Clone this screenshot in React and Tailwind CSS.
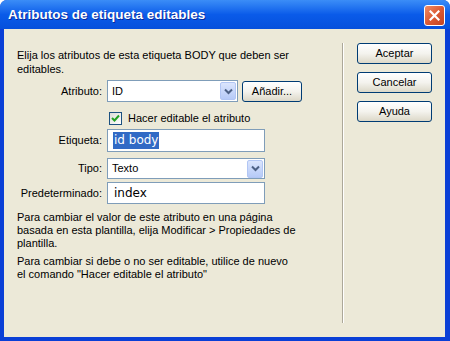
import React from "react";

const ui = { fontFamily: '"Liberation Sans", Arial, sans-serif' };
const big = { fontFamily: '"DejaVu Sans", Verdana, sans-serif' };

function Arrow() {
  return (
    <div className="w-[16px] h-[18px] mr-[1px] rounded-[2px] border border-[#b2c6f4] bg-gradient-to-b from-[#dbe5fd] to-[#b6caf7] flex items-center justify-center">
      <svg width="9" height="7" viewBox="0 0 9 7">
        <path d="M1 1.5 L4.5 5 L8 1.5" fill="none" stroke="#4d6185" strokeWidth="2" />
      </svg>
    </div>
  );
}

function XPButton({ children, className = "" }) {
  return (
    <div
      className={
        "h-[21px] rounded-[3px] border border-[#003c74] bg-gradient-to-b from-[#ffffff] via-[#f4f3ee] to-[#dcd8c8] flex items-center justify-center text-[11px] text-black " +
        className
      }
      style={ui}
    >
      {children}
    </div>
  );
}

function Label({ children }) {
  return (
    <div className="w-[85px] text-right text-[11px] text-black" style={ui}>
      {children}
    </div>
  );
}

export default function App() {
  return (
    <div className="w-[450px] h-[341px] bg-white">
      <div className="w-[450px] h-[341px] bg-[#0a3fd6] rounded-t-[7px] flex flex-col overflow-hidden">
        <div className="h-[29px] shrink-0 bg-gradient-to-b from-[#3b8df7] via-[#0a5be9] to-[#0650dc] flex items-center justify-between pl-[8px] pr-[5px]">
          <div
            className="text-white font-bold text-[13.5px] leading-none pt-[1px]"
            style={{ ...ui, textShadow: "1px 1px 0 #0a2a9a" }}
          >
            Atributos de etiqueta editables
          </div>
          <div className="w-[21px] h-[21px] rounded-[3px] border border-white bg-gradient-to-br from-[#f08c64] via-[#dc5a34] to-[#c24322] flex items-center justify-center mt-[2px]">
            <svg width="11" height="11" viewBox="0 0 11 11">
              <path d="M1.5 1.5 L9.5 9.5 M9.5 1.5 L1.5 9.5" stroke="white" strokeWidth="2.2" strokeLinecap="square" />
            </svg>
          </div>
        </div>
        <div className="flex-1 ml-[4px] mr-[5px] mb-[4px] bg-[#ece9d8] flex">
          <div className="w-[338px] pl-[13px] pt-[19px] text-[11px] text-black" style={ui}>
            <div className="leading-[14px]">
              Elija los atributos de esta etiqueta BODY que deben ser
              <br />
              editables.
            </div>
            <div className="mt-[4px] flex items-center h-[22px]">
              <Label>Atributo:</Label>
              <div className="ml-[5px] w-[131px] h-[22px] border border-[#7f9db9] bg-white flex items-center justify-between">
                <span className="pl-[4px]">ID</span>
                <Arrow />
              </div>
              <XPButton className="ml-[4px] w-[60px]">Añadir...</XPButton>
            </div>
            <div className="mt-[10px] ml-[92px] flex items-center h-[13px]">
              <div className="w-[13px] h-[13px] border border-[#1c5180] bg-gradient-to-br from-[#dcdcd7] to-white flex items-center justify-center">
                <svg width="9" height="9" viewBox="0 0 9 9">
                  <path d="M1 4 L3.5 6.5 L8 1.5" fill="none" stroke="#21a121" strokeWidth="2" />
                </svg>
              </div>
              <span className="ml-[6px] leading-none">Hacer editable el atributo</span>
            </div>
            <div className="mt-[4px] flex items-center h-[23px]">
              <Label>Etiqueta:</Label>
              <div className="ml-[5px] w-[158px] h-[23px] border border-[#7f9db9] bg-white flex items-center">
                <span
                  className="ml-[5px] px-[1px] h-[17px] bg-[#316ac5] text-white text-[12px] leading-[17px]"
                  style={big}
                >
                  id body
                </span>
              </div>
            </div>
            <div className="mt-[6px] flex items-center h-[21px]">
              <Label>Tipo:</Label>
              <div className="ml-[5px] w-[158px] h-[21px] border border-[#7f9db9] bg-white flex items-center justify-between">
                <span className="pl-[4px]">Texto</span>
                <Arrow />
              </div>
            </div>
            <div className="mt-[3px] flex items-center h-[22px]">
              <Label>Predeterminado:</Label>
              <div className="ml-[5px] w-[158px] h-[22px] border border-[#7f9db9] bg-white flex items-center">
                <span className="pl-[6px] text-[12px]" style={big}>
                  index
                </span>
              </div>
            </div>
            <div className="mt-[7px] leading-[13px]">
              Para cambiar el valor de este atributo en una página
              <br />
              basada en esta plantilla, elija Modificar &gt; Propiedades de
              <br />
              plantilla.
            </div>
            <div className="mt-[5px] leading-[13px]">
              Para cambiar si debe o no ser editable, utilice de nuevo
              <br />
              el comando "Hacer editable el atributo"
            </div>
          </div>
          <div className="w-[2px] mt-[14px] mb-[14px] border-l border-[#aca899] border-r border-r-white" />
          <div className="flex-1 pl-[13px] pt-[14px] flex flex-col gap-[8px]">
            <XPButton className="w-[75px]">Aceptar</XPButton>
            <XPButton className="w-[75px]">Cancelar</XPButton>
            <XPButton className="w-[75px]">Ayuda</XPButton>
          </div>
        </div>
      </div>
    </div>
  );
}
